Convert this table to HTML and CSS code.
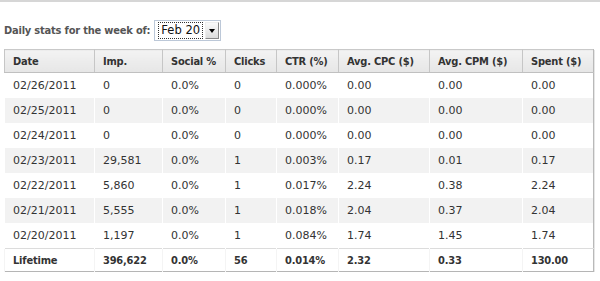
FILE: index.html
```html
<!DOCTYPE html>
<html>
<head>
<meta charset="utf-8">
<link rel="stylesheet" href="styles.css">
</head>
<body>
<div class="page">
  <div class="filter">
    <span class="filter-label">Daily stats for the week of:</span>
    <span class="select">
      <span class="select-value"><span class="focus">Feb 20</span></span>
      <span class="select-btn"><span class="arrow"></span></span>
    </span>
  </div>
  <table class="stats">
    <colgroup>
      <col class="c1"><col class="c2"><col class="c3"><col class="c4"><col class="c5"><col class="c6"><col class="c7"><col class="c8">
    </colgroup>
    <thead>
      <tr><th>Date</th><th>Imp.</th><th>Social %</th><th>Clicks</th><th>CTR (%)</th><th>Avg. CPC ($)</th><th>Avg. CPM ($)</th><th>Spent ($)</th></tr>
    </thead>
    <tbody>
      <tr><td>02/26/2011</td><td>0</td><td>0.0%</td><td>0</td><td>0.000%</td><td>0.00</td><td>0.00</td><td>0.00</td></tr>
      <tr><td>02/25/2011</td><td>0</td><td>0.0%</td><td>0</td><td>0.000%</td><td>0.00</td><td>0.00</td><td>0.00</td></tr>
      <tr><td>02/24/2011</td><td>0</td><td>0.0%</td><td>0</td><td>0.000%</td><td>0.00</td><td>0.00</td><td>0.00</td></tr>
      <tr><td>02/23/2011</td><td>29,581</td><td>0.0%</td><td>1</td><td>0.003%</td><td>0.17</td><td>0.01</td><td>0.17</td></tr>
      <tr><td>02/22/2011</td><td>5,860</td><td>0.0%</td><td>1</td><td>0.017%</td><td>2.24</td><td>0.38</td><td>2.24</td></tr>
      <tr><td>02/21/2011</td><td>5,555</td><td>0.0%</td><td>1</td><td>0.018%</td><td>2.04</td><td>0.37</td><td>2.04</td></tr>
      <tr><td>02/20/2011</td><td>1,197</td><td>0.0%</td><td>1</td><td>0.084%</td><td>1.74</td><td>1.45</td><td>1.74</td></tr>
    </tbody>
    <tfoot>
      <tr><td>Lifetime</td><td>396,622</td><td>0.0%</td><td>56</td><td>0.014%</td><td>2.32</td><td>0.33</td><td>130.00</td></tr>
    </tfoot>
  </table>
</div>
</body>
</html>
```
FILE: styles.css
```css
html, body {
  margin: 0;
  padding: 0;
  background: #fff;
}
body {
  font-family: "DejaVu Sans", "Lucida Grande", sans-serif;
  font-size: 11px;
  color: #333;
}
.page {
  border-top: 2px solid #d6d6d6;
  padding: 18px 0 0 4px;
}
.filter {
  display: flex;
  align-items: center;
  height: 21px;
  margin-bottom: 8px;
}
.filter-label,
.stats th,
.stats tfoot td {
  font-family: "DejaVu Sans Condensed", "DejaVu Sans", sans-serif;
  font-stretch: condensed;
  font-weight: bold;
  letter-spacing: -0.2px;
}
.filter-label {
  color: #555;
  margin-right: 4px;
}
.select {
  display: inline-flex;
  border: 1px solid #bcc8d8;
  box-sizing: border-box;
  height: 21px;
  padding: 1px 1px 1px 2px;
  background: #fff;
}
.select-value {
  display: flex;
  align-items: center;
  padding: 0 1px 0 1px;
}
.focus {
  border: 1px dotted #333;
  padding: 1px 2px 1px 2px;
  line-height: 13px;
  color: #111;
  font-size: 11.5px;
}
.select-btn {
  width: 12px;
  margin-left: 1px;
  background: linear-gradient(#fafafa, #dcdcdc);
  border: 1px solid #999;
  border-color: #eee #888 #888 #eee;
  display: flex;
  align-items: center;
  justify-content: center;
}
.arrow {
  width: 0;
  height: 0;
  border-left: 3px solid transparent;
  border-right: 3px solid transparent;
  border-top: 4px solid #000;
}
.stats {
  border-collapse: collapse;
  table-layout: fixed;
  width: 589px;
  border: 1px solid #c9c9c9;
  border-right-color: #b9b9b9;
  border-bottom-color: #b5b5b5;
  box-shadow: 1px 1px 0 #e6e6e6;
}
.c1 { width: 90px; }
.c2 { width: 68px; }
.c3 { width: 63px; }
.c4 { width: 51px; }
.c5 { width: 62px; }
.c6 { width: 91px; }
.c7 { width: 93px; }
.c8 { width: 71px; }
.stats th {
  text-align: left;
  color: #333;
  height: 22px;
  padding: 0 0 0 8px;
  background: linear-gradient(#f3f3f3, #e6e6e6);
  border-left: 1px solid #c6c6c6;
  border-bottom: 1px solid #c0c0c0;
}
.stats td {
  height: 25px;
  padding: 0 0 0 8px;
  border-left: 1px solid #fff;
  white-space: nowrap;
}
.stats tbody tr:nth-child(even) td {
  background: #f2f2f2;
}
.stats tfoot td {
  height: 22px;
  border-top: 1px solid #dcdcdc;
  border-left: 1px solid #f4f4f4;
}
```
